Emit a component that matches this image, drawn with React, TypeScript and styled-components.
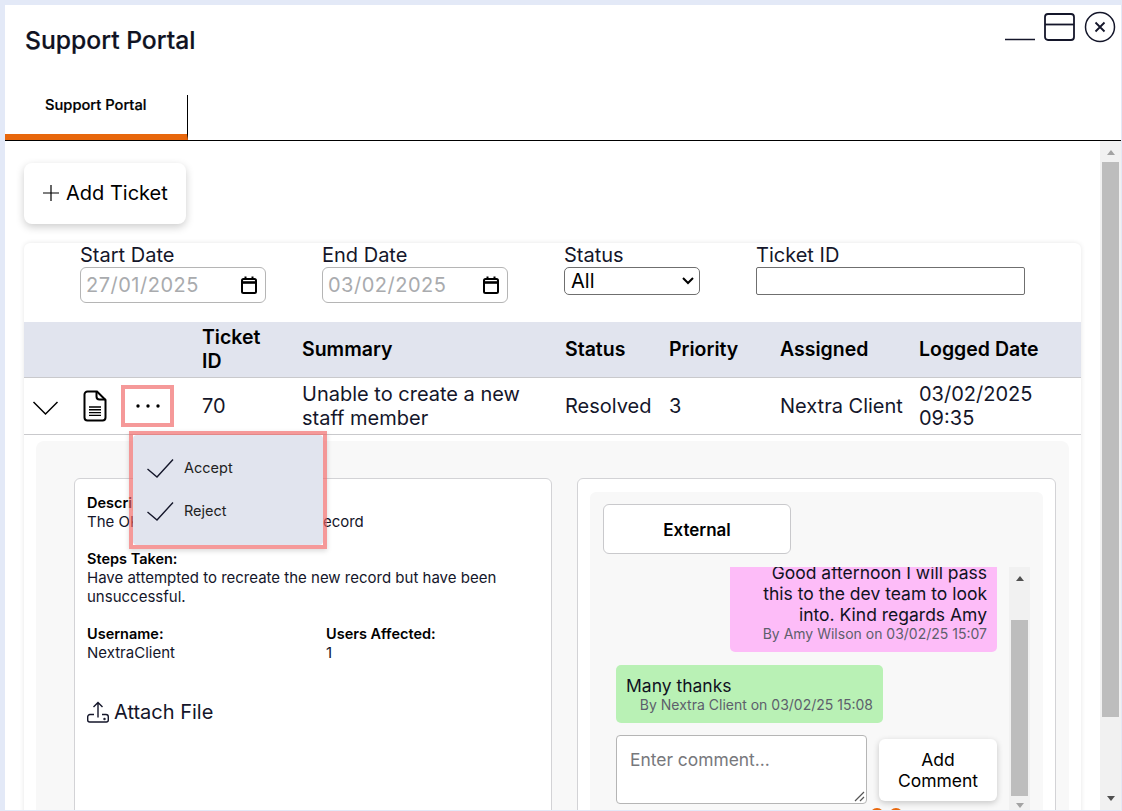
import React from "react";
import styled, { createGlobalStyle } from "styled-components";

const GlobalStyle = createGlobalStyle`
  html, body {
    margin: 0;
    padding: 0;
    height: 100%;
    overflow: hidden;
    background: #e3e9f7;
    font-family: Inter, "Noto Sans", sans-serif;
    color: #000;
  }
  * { box-sizing: border-box; }
`;

const highlight = "rgba(240, 100, 100, 0.66)";

const Page = styled.div`
  height: 811px;
  padding: 5px 1px 1px 5px;
  display: flex;
`;

const Dialog = styled.div`
  flex: 1;
  min-width: 0;
  background: #fff;
  display: flex;
  flex-direction: column;
  overflow: hidden;
`;

const Header = styled.div`
  height: 90px;
  flex: none;
  display: flex;
  justify-content: space-between;
  align-items: flex-start;
  padding: 20px 5px 0 20px;
`;

const Title = styled.h1`
  margin: 0;
  font-size: 24.7px;
  line-height: 30px;
  font-weight: 500;
  color: #0f1222;
  -webkit-text-stroke: 0.2px #0f1222;
`;

const WindowActions = styled.div`
  display: flex;
  align-items: flex-start;
  gap: 9px;
  margin-top: -16px;
`;

const TabBar = styled.div`
  height: 46px;
  flex: none;
  display: flex;
  border-bottom: 1px solid #000;
`;

const Tab = styled.div`
  width: 183px;
  height: 45px;
  border-right: 1px solid #000;
  border-bottom: 6px solid #e8670c;
  margin-bottom: -1px;
  padding: 0 0 0 40px;
  font-size: 14.7px;
  line-height: 20px;
  font-weight: 500;
  -webkit-text-stroke: 0.2px #000;
`;

const Body = styled.div`
  flex: 1;
  min-height: 0;
  display: flex;
`;

const Main = styled.div`
  flex: 1;
  min-width: 0;
  overflow: hidden;
  padding: 22px 19px 0 19px;
`;

const AddTicketButton = styled.button`
  width: 162px;
  height: 61px;
  display: flex;
  align-items: center;
  gap: 6px;
  padding: 0 0 2px 18px;
  border: 0;
  border-radius: 8px;
  background: #fff;
  box-shadow: 0 3px 8px rgba(0, 0, 0, 0.2);
  font: 400 20px Inter, sans-serif;
  color: #000;
`;

const Card = styled.section`
  margin-top: 19px;
  border-radius: 6px 6px 0 0;
  box-shadow: 0 0 5px rgba(0, 0, 0, 0.1);
  background: #fff;
`;

const Filters = styled.div`
  height: 79px;
  display: flex;
  padding: 1px 0 0 56px;
`;

const Filter = styled.label<{ $width: number }>`
  width: ${(p) => p.$width}px;
  flex: none;
  display: block;
  font-size: 20px;
  line-height: 22px;
  color: #14162a;
`;

const DateBox = styled.div`
  width: 186px;
  height: 36px;
  margin-top: 1px;
  display: flex;
  align-items: center;
  justify-content: space-between;
  padding: 0 8px 0 5px;
  border: 1px solid #b5b5b5;
  border-radius: 6px;
  color: #a9abae;
  font-size: 20px;
  letter-spacing: 0.5px;
`;

const SelectBox = styled.div`
  width: 136px;
  height: 28px;
  margin-top: 1px;
  display: flex;
  align-items: center;
  justify-content: space-between;
  padding: 0 5px 1px 6px;
  border: 1px solid #6f6f6f;
  border-radius: 5px;
  color: #000;
  font-size: 20px;
`;

const TextBox = styled.div`
  width: 269px;
  height: 28px;
  margin-top: 1px;
  border: 1px solid #6f6f6f;
  border-radius: 2px;
`;

const Row = styled.div<{ $head?: boolean }>`
  display: grid;
  grid-template-columns: 178px 100px 263px 104px 111px 139px 1fr;
  align-items: center;
  height: ${(p) => (p.$head ? 56 : 57)}px;
  padding-bottom: ${(p) => (p.$head ? 2 : 0)}px;
  font-size: ${(p) => (p.$head ? 19.5 : 20)}px;
  line-height: 24px;
  font-weight: ${(p) => (p.$head ? 600 : 400)};
  background: ${(p) => (p.$head ? "#e1e4ee" : "#fff")};
  border-bottom: 1px solid #c9c9cc;
  color: ${(p) => (p.$head ? "#000" : "#14162a")};
`;

const RowActions = styled.div`
  display: flex;
  align-items: center;
  padding-left: 8px;
  position: relative;
`;

const DocIcon = styled.svg`
  flex: none;
  margin-left: 23px;
`;

const MoreButton = styled.div`
  width: 53px;
  height: 42px;
  margin: -1px 0 0 14px;
  flex: none;
  display: flex;
  align-items: center;
  justify-content: center;
  border: 4px solid ${highlight};
`;

const MenuHighlight = styled.div`
  position: absolute;
  left: 105px;
  top: 45px;
  width: 198px;
  height: 118px;
  z-index: 5;
  border: 4px solid ${highlight};
  box-shadow: 0 2px 5px rgba(0, 0, 0, 0.15);
`;

const Menu = styled.div`
  height: 100%;
  padding: 12px 14px 0;
  background: #e1e4ee;
  border-radius: 4px;
`;

const MenuItem = styled.div`
  height: 43px;
  display: flex;
  align-items: center;
  gap: 10px;
  font-size: 14.5px;
  font-weight: 400;
  color: #222;
`;

const Expanded = styled.div`
  margin: 6px 12px 0;
  padding: 37px 12px 0 38px;
  height: 500px;
  background: #f8f8f8;
  border-radius: 8px 8px 0 0;
  display: flex;
  gap: 25px;
`;

const DetailBox = styled.div`
  width: 478px;
  height: 400px;
  flex: none;
  padding: 14px 12px;
  background: #fff;
  border: 1px solid #d3d3d6;
  border-radius: 6px;
  font-size: 15px;
  line-height: 19px;
  color: #14162a;
`;

const FieldLabel = styled.div`
  font-size: 14.5px;
  font-weight: 600;
  color: #000;
`;

const Field = styled.div`
  margin-bottom: 18px;
`;

const FieldPair = styled.div`
  display: grid;
  grid-template-columns: 239px 1fr;
`;

const AttachFile = styled.div`
  margin-top: 38px;
  display: flex;
  align-items: center;
  gap: 5px;
  font-size: 20px;
  line-height: 24px;
`;

const ChatBox = styled.div`
  width: 479px;
  height: 400px;
  flex: none;
  padding: 13px 12px;
  background: #fff;
  border: 1px solid #d3d3d6;
  border-radius: 6px;
`;

const ChatInner = styled.div`
  height: 400px;
  padding: 12px 13px;
  background: #f8f8f8;
  border-radius: 6px;
`;

const ChatTab = styled.div`
  width: 188px;
  height: 50px;
  display: flex;
  align-items: center;
  justify-content: center;
  padding-top: 1px;
  background: #fff;
  border: 1px solid #c9c9cc;
  border-radius: 6px;
  font-size: 17px;
  font-weight: 600;
`;

const ChatScroll = styled.div`
  margin-top: 13px;
  height: 249px;
  display: flex;
`;

const Messages = styled.div`
  width: 406px;
  flex: none;
  overflow: hidden;
  display: flex;
  flex-direction: column;
  justify-content: flex-end;
  padding: 0 12px 0 13px;
`;

const Bubble = styled.div<{ $mine?: boolean }>`
  flex: none;
  align-self: ${(p) => (p.$mine ? "flex-end" : "flex-start")};
  width: 267px;
  padding: 10px 10px 9px;
  margin-bottom: ${(p) => (p.$mine ? 13 : 12)}px;
  background: ${(p) => (p.$mine ? "#fdbcf8" : "#b9f1b5")};
  border-radius: 5px;
  font-size: 17.5px;
  line-height: 21px;
  text-align: ${(p) => (p.$mine ? "right" : "left")};
  color: #101222;
`;

const BubbleMeta = styled.div`
  font-size: 14px;
  line-height: 18px;
  text-align: right;
  color: #5d5f6c;
`;

const CommentRow = styled.div`
  flex: none;
  display: flex;
  align-items: flex-start;
  gap: 12px;
  height: 69px;
`;

const CommentInput = styled.div`
  width: 251px;
  height: 69px;
  position: relative;
  padding: 13px 13px;
  background: #fff;
  border: 1px solid #b5b5b5;
  border-radius: 4px;
  font-size: 17.4px;
  line-height: 22px;
  color: #77787c;
`;

const ResizeHandle = styled.svg`
  position: absolute;
  right: 1px;
  bottom: 1px;
`;

const CommentButton = styled.div`
  width: 118px;
  height: 62px;
  margin-top: 4px;
  display: flex;
  align-items: center;
  justify-content: center;
  text-align: center;
  background: #fff;
  border-radius: 6px;
  box-shadow: 0 2px 6px rgba(0, 0, 0, 0.2);
  font-size: 17.5px;
  line-height: 21px;
`;

const Dots = styled.div`
  flex: none;
  height: 8px;
  margin: 4px 0 0 254px;
  display: flex;
  gap: 5px;
  overflow: hidden;
`;

const Dot = styled.div`
  width: 14px;
  height: 14px;
  flex: none;
  border-radius: 50%;
  background: #e8670c;
`;

const ScrollBar = styled.div<{ $width: number; $pad: string }>`
  width: ${(p) => p.$width}px;
  flex: none;
  display: flex;
  flex-direction: column;
  align-items: center;
  padding: ${(p) => p.$pad};
  background: #f1f1f1;
`;

const ScrollArrow = styled.div<{ $down?: boolean; $color: string }>`
  width: 17px;
  height: 18px;
  flex: none;
  display: flex;
  align-items: center;
  justify-content: center;
  &::before {
    content: "";
    border-left: 4.5px solid transparent;
    border-right: 4.5px solid transparent;
    ${(p) => (p.$down ? "border-top" : "border-bottom")}: 5px solid ${(p) => p.$color};
  }
`;

const ScrollTrack = styled.div`
  flex: 1;
  width: 100%;
  min-height: 0;
`;

const ScrollThumb = styled.div<{ $top: number; $height: number }>`
  margin: ${(p) => p.$top}px auto 0;
  width: 17px;
  height: ${(p) => p.$height}px;
  background: #bdbdbd;
`;

const CalendarIcon = () => (
  <svg width="16" height="18" viewBox="0 0 16 18" fill="none" stroke="#000">
    <rect x="1" y="3" width="14" height="14" rx="1.500" strokeWidth="2" />
    <path d="M1 6.500h14" strokeWidth="2.600" />
    <path d="M4.500 0.500v3M11.500 0.500v3" strokeWidth="2" />
  </svg>
);

const CheckIcon = () => (
  <svg width="27" height="19" viewBox="0 0 27 19" fill="none" stroke="#14162a" strokeWidth="1.400">
    <path d="M0.500 10L10 18L26 0.500" />
  </svg>
);

const App = () => (
  <Page>
    <GlobalStyle />
    <Dialog>
      <Header>
        <Title>Support Portal</Title>
        <WindowActions>
          <svg width="30" height="36" viewBox="0 0 30 36" fill="none" stroke="#14162a" strokeWidth="1.500">
            <path d="M0 30.500h30" />
          </svg>
          <svg width="31" height="32" viewBox="0 0 31 32" fill="none" stroke="#14162a" strokeWidth="1.800">
            <rect x="1" y="5" width="29" height="26" rx="3" />
            <path d="M1 15.500h29" />
          </svg>
          <svg width="32" height="36" viewBox="0 0 32 36" fill="none" stroke="#14162a" strokeWidth="1.500">
            <circle cx="16" cy="18" r="14.500" />
            <path d="M11.500 13.500l9 9M20.500 13.500l-9 9" strokeWidth="1.800" />
          </svg>
        </WindowActions>
      </Header>
      <TabBar>
        <Tab>Support Portal</Tab>
      </TabBar>
      <Body>
        <Main>
          <AddTicketButton>
            <svg width="18" height="18" viewBox="0 0 18 18" stroke="#000" strokeWidth="1.200">
              <path d="M9 1v16M1 9h16" />
            </svg>
            Add Ticket
          </AddTicketButton>
          <Card>
            <Filters>
              <Filter $width={242}>
                Start Date
                <DateBox>
                  27/01/2025
                  <CalendarIcon />
                </DateBox>
              </Filter>
              <Filter $width={242}>
                End Date
                <DateBox>
                  03/02/2025
                  <CalendarIcon />
                </DateBox>
              </Filter>
              <Filter $width={192}>
                Status
                <SelectBox>
                  All
                  <svg width="12" height="8" viewBox="0 0 12 8" fill="none" stroke="#000" strokeWidth="2">
                    <path d="M1 1l5 5 5-5" />
                  </svg>
                </SelectBox>
              </Filter>
              <Filter $width={270}>
                Ticket ID
                <TextBox />
              </Filter>
            </Filters>
            <Row $head>
              <div />
              <div>
                Ticket
                <br />
                ID
              </div>
              <div>Summary</div>
              <div>Status</div>
              <div>Priority</div>
              <div>Assigned</div>
              <div>Logged Date</div>
            </Row>
            <Row>
              <RowActions>
                <svg width="28" height="22" viewBox="0 0 28 22" fill="none" stroke="#000" strokeWidth="1.500">
                  <path d="M1.500 7l12 12L25.500 7" />
                </svg>
                <DocIcon width="24" height="32" viewBox="0 0 24 32" fill="none" stroke="#000" strokeWidth="2">
                  <path d="M4.500 1.500h9.500l8.500 8.500v17.500a3 3 0 0 1-3 3h-15a3 3 0 0 1-3-3V4.500a3 3 0 0 1 3-3z" />
                  <path d="M13.500 1.500v5a3 3 0 0 0 3 3h6" />
                  <path d="M6 17h12M6 19.800h12M6 22.600h12M6 25.400h12" strokeWidth="1.400" />
                </DocIcon>
                <MoreButton>
                  <svg width="24" height="4" viewBox="0 0 24 4" fill="#000">
                    <circle cx="2" cy="2" r="1.700" />
                    <circle cx="12" cy="2" r="1.700" />
                    <circle cx="22" cy="2" r="1.700" />
                  </svg>
                </MoreButton>
                <MenuHighlight>
                  <Menu>
                    <MenuItem>
                      <CheckIcon />
                      Accept
                    </MenuItem>
                    <MenuItem>
                      <CheckIcon />
                      Reject
                    </MenuItem>
                  </Menu>
                </MenuHighlight>
              </RowActions>
              <div>70</div>
              <div>
                Unable to create a new
                <br />
                staff member
              </div>
              <div>Resolved</div>
              <div>3</div>
              <div>Nextra Client</div>
              <div>
                03/02/2025
                <br />
                09:35
              </div>
            </Row>
            <Expanded>
              <DetailBox>
                <Field>
                  <FieldLabel>Description:</FieldLabel>
                  The OK button does not add the record
                </Field>
                <Field>
                  <FieldLabel>Steps Taken:</FieldLabel>
                  Have attempted to recreate the new record but have been unsuccessful.
                </Field>
                <FieldPair>
                  <div>
                    <FieldLabel>Username:</FieldLabel>
                    NextraClient
                  </div>
                  <div>
                    <FieldLabel>Users Affected:</FieldLabel>1
                  </div>
                </FieldPair>
                <AttachFile>
                  <svg width="22" height="22" viewBox="0 0 22 22" fill="none" stroke="#14162a" strokeWidth="1.400">
                    <path d="M11 16.500V1.500M6.500 6L11 1.500L15.500 6" />
                    <path d="M7 13.500H3a2.300 2.300 0 0 0-2.300 2.300V19a2 2 0 0 0 2 2h16.600a2 2 0 0 0 2-2v-3.200a2.300 2.300 0 0 0-2.300-2.300h-4" />
                    <circle cx="17.500" cy="18" r="0.500" />
                  </svg>
                  Attach File
                </AttachFile>
              </DetailBox>
              <ChatBox>
                <ChatInner>
                  <ChatTab>External</ChatTab>
                  <ChatScroll>
                    <Messages>
                      <Bubble $mine>
                        Good afternoon I will pass this to the dev team to look into. Kind regards Amy
                        <BubbleMeta>By Amy Wilson on 03/02/25 15:07</BubbleMeta>
                      </Bubble>
                      <Bubble>
                        Many thanks
                        <BubbleMeta>By Nextra Client on 03/02/25 15:08</BubbleMeta>
                      </Bubble>
                      <CommentRow>
                        <CommentInput>
                          Enter comment...
                          <ResizeHandle width="12" height="12" viewBox="0 0 12 12" stroke="#555" strokeWidth="1.200">
                            <path d="M2 11l9-9M7 11l4-4" />
                          </ResizeHandle>
                        </CommentInput>
                        <CommentButton>
                          Add
                          <br />
                          Comment
                        </CommentButton>
                      </CommentRow>
                      <Dots>
                        <Dot />
                        <Dot />
                      </Dots>
                    </Messages>
                    <ScrollBar $width={21} $pad="2px 0">
                      <ScrollArrow $color="#505050" />
                      <ScrollTrack>
                        <ScrollThumb $top={33} $height={176} />
                      </ScrollTrack>
                      <ScrollArrow $down $color="#a3a3a3" />
                    </ScrollBar>
                  </ChatScroll>
                </ChatInner>
              </ChatBox>
            </Expanded>
          </Card>
        </Main>
        <ScrollBar $width={21} $pad="2px 0 3px">
          <ScrollArrow $color="#a3a3a3" />
          <ScrollTrack>
            <ScrollThumb $top={1} $height={555} />
          </ScrollTrack>
          <ScrollArrow $down $color="#505050" />
        </ScrollBar>
      </Body>
    </Dialog>
  </Page>
);

export default App;
